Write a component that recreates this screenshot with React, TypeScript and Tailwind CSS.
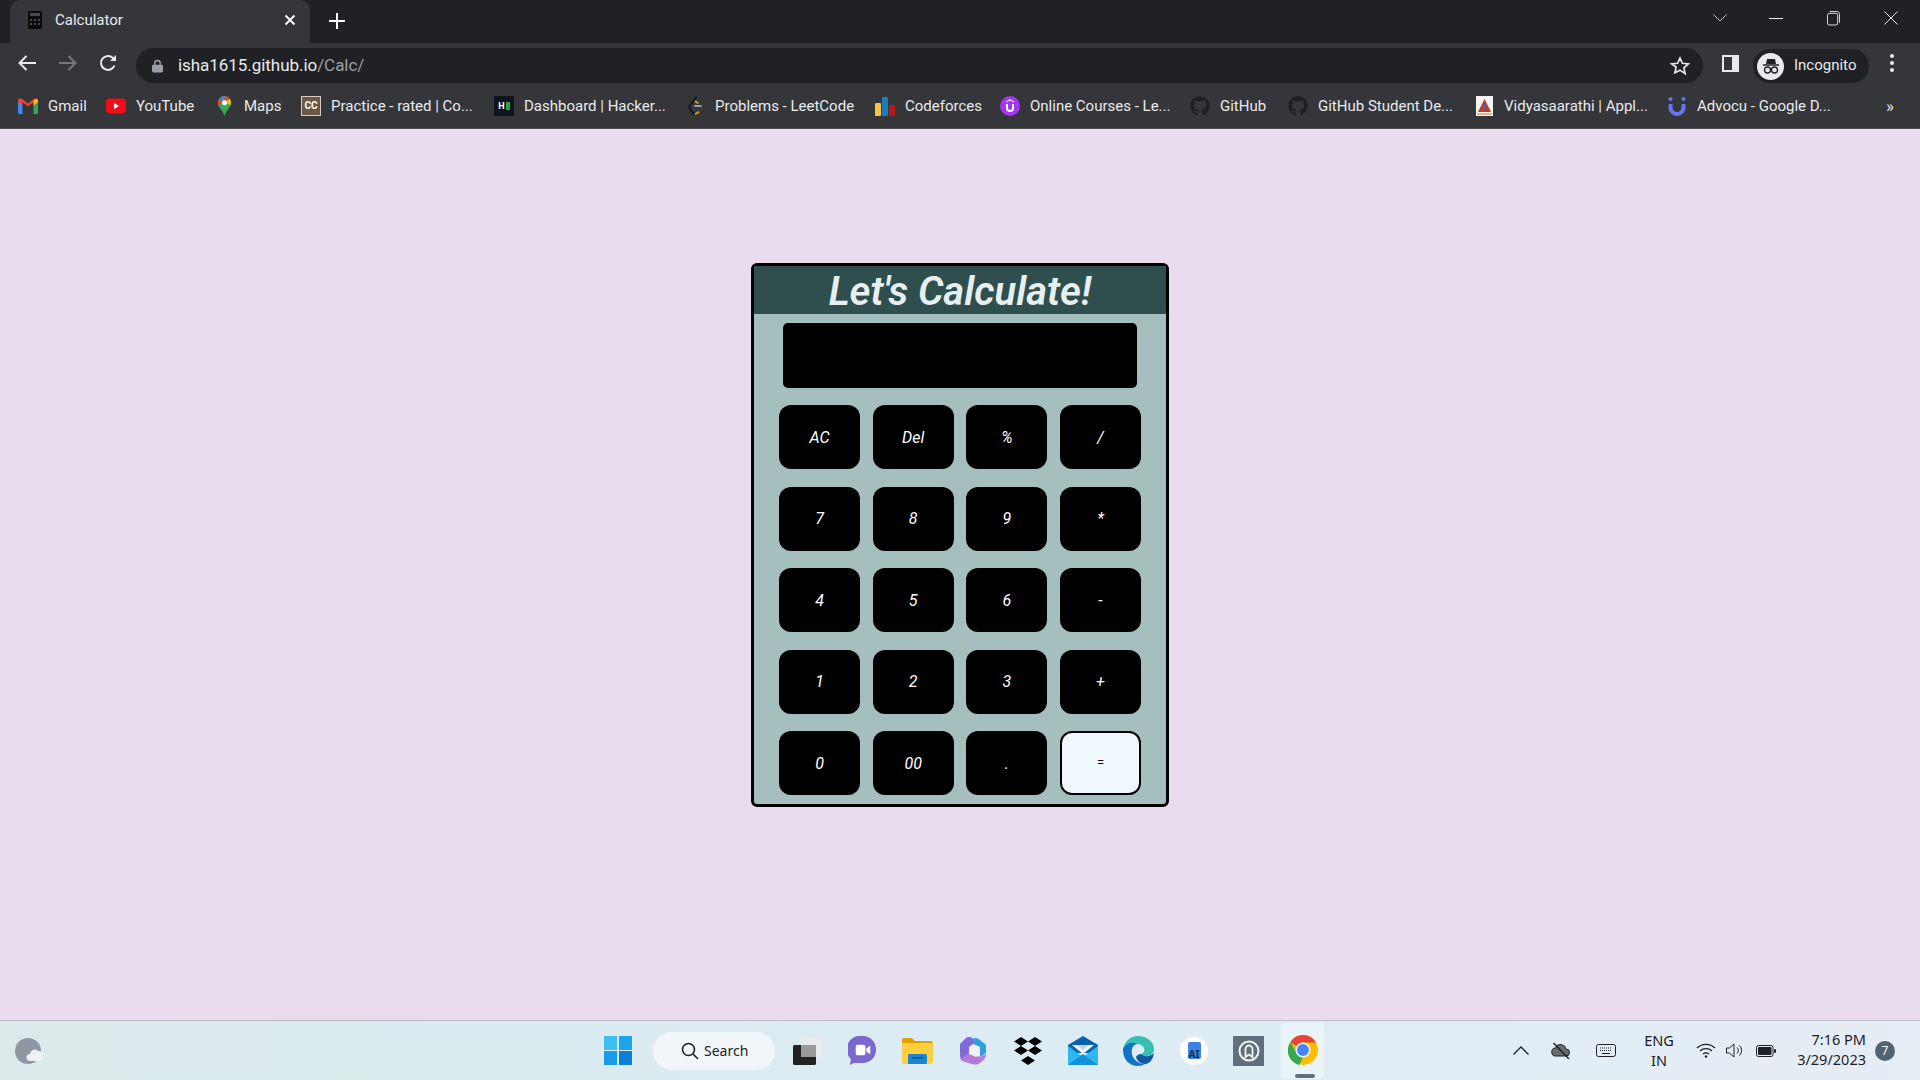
import React from 'react';
import { FaGithub } from 'react-icons/fa';

// --- bookmark bar icons ---
const GmailIcon = () => (
  <svg viewBox="0 0 20 16" className="h-[16px] w-[20px]">
    <path d="M0 3v11.5A1.5 1.5 0 0 0 1.5 16H4.500V7z" fill="#4285f4" />
    <path d="M20 3v11.5a1.500 1.500 0 0 1-1.500 1.500H15.500V7z" fill="#34a853" />
    <path d="M0 2.500C0 .5 2.300-.5 3.800.700L10 5.400 16.200.7C17.700-.5 20 .5 20 2.500V4l-4.500 3.400V4.200L10 8.400 4.500 4.200v3.200L0 4z" fill="#ea4335" />
    <path d="M15.500 2.800l2-1.500C18.600.7 20 1.400 20 2.800V4l-4.500 3.400z" fill="#fbbc04" />
  </svg>
);

const YoutubeIcon = () => (
  <svg viewBox="0 0 20 16" className="h-[16px] w-[20px]">
    <rect width="20" height="15" y="0.500" rx="4" fill="#f40d18" />
    <path d="M8 5l5 3-5 3z" fill="#fff" />
  </svg>
);

const MapsIcon = () => (
  <svg viewBox="0 0 16 24" className="h-[20px] w-[15px]">
    <path d="M8 0a8 8 0 0 1 8 8c0 5-5 8-8 16C5 16 0 13 0 8a8 8 0 0 1 8-8z" fill="#34a853" />
    <path d="M2 3a8 8 0 0 1 6-3v5a3 3 0 0 0-2.300 1z" fill="#4285f4" />
    <path d="M8 0a8 8 0 0 1 6.500 3.300L10.300 6A3 3 0 0 0 8 5z" fill="#ea4335" />
    <path d="M14.500 3.300A8 8 0 0 1 15 11L10 8.500A3 3 0 0 0 10.300 6z" fill="#fbbc04" />
    <path d="M2 3a8 8 0 0 0-1.200 8.500L5.700 6.300z" fill="#ea4335" />
    <circle cx="8" cy="8" r="3" fill="#fff" />
  </svg>
);

const ChefIcon = () => (
  <span className="flex h-[20px] w-[20px] items-center justify-center border border-[#d8cdc0] bg-[#6e5745] text-[10px] leading-none font-bold text-white">
    CC
  </span>
);

const RankIcon = () => (
  <span className="flex h-[20px] w-[20px] items-center justify-center gap-[1px] bg-[#0e141e]">
    <span className="text-[9px] leading-none font-bold text-white">H</span>
    <span className="h-[8px] w-[4px] bg-[#1ba94c]" />
  </span>
);

const LeetIcon = () => (
  <svg viewBox="0 0 18 24" className="h-[20px] w-[16px]" fill="none" strokeWidth="2">
    <path d="M11 1L3 11" stroke="#111" />
    <path d="M3 11L2 13l2 5 5 4" stroke="#111" />
    <path d="M9 6l4 3" stroke="#e6a020" />
    <path d="M8 12h9" stroke="#b3b3b3" />
    <path d="M9 22l5-3" stroke="#e6a020" />
  </svg>
);

const ForcesIcon = () => (
  <span className="flex h-[20px] w-[20px] items-end gap-[1px]">
    <span className="h-[13px] w-[6px] rounded-[1px] bg-[#f6c343]" />
    <span className="h-[19px] w-[6px] rounded-[1px] bg-[#1c7cc0]" />
    <span className="h-[11px] w-[6px] rounded-[1px] bg-[#b31b1b]" />
  </span>
);

const UdemyIcon = () => (
  <svg viewBox="0 0 20 20" className="h-[20px] w-[20px]">
    <circle cx="10" cy="10" r="10" fill="#a435f0" />
    <path d="M10 3l4 2.500v1L10 4.200 6 6.500v-1z" fill="#fff" />
    <path d="M7 8v4a3 3 0 0 0 6 0V8" fill="none" stroke="#fff" strokeWidth="2" />
  </svg>
);

const VidyaIcon = () => (
  <svg viewBox="0 0 17 20" className="h-[20px] w-[17px]">
    <rect width="17" height="20" fill="#f4f4f4" />
    <path d="M8.500 3L15 16H2z" fill="#c0392b" />
    <rect x="7" y="8" width="3" height="6" fill="#2f6fb3" />
    <rect x="1" y="17" width="15" height="2" fill="#e3b58d" />
  </svg>
);

const AdvocuIcon = () => (
  <svg viewBox="0 0 18 20" className="h-[20px] w-[18px]">
    <path d="M2.500 8v3.500a6.500 6.500 0 0 0 13 0V8" fill="none" stroke="#6675f0" strokeWidth="4" />
    <circle cx="2.500" cy="3" r="2" fill="#6675f0" />
    <circle cx="15.500" cy="3" r="2" fill="#6675f0" />
  </svg>
);

const bookmarks = [
  { icon: <GmailIcon />, label: 'Gmail', box: 'w-[88px]' },
  { icon: <YoutubeIcon />, label: 'YouTube', box: 'w-[108px]' },
  { icon: <MapsIcon />, label: 'Maps', box: 'w-[87px]' },
  { icon: <ChefIcon />, label: 'Practice - rated | Co...', box: 'w-[193px]' },
  { icon: <RankIcon />, label: 'Dashboard | Hacker...', box: 'w-[191px]' },
  { icon: <LeetIcon />, label: 'Problems - LeetCode', box: 'w-[190px]' },
  { icon: <ForcesIcon />, label: 'Codeforces', box: 'w-[125px]' },
  { icon: <UdemyIcon />, label: 'Online Courses - Le...', box: 'w-[190px]' },
  { icon: <FaGithub className="h-[20px] w-[20px] text-[#1d2023]" />, label: 'GitHub', box: 'w-[98px]' },
  { icon: <FaGithub className="h-[20px] w-[20px] text-[#1d2023]" />, label: 'GitHub Student De...', box: 'w-[186px]' },
  { icon: <VidyaIcon />, label: 'Vidyasaarathi | Appl...', box: 'w-[193px]' },
  { icon: <AdvocuIcon />, label: 'Advocu - Google D...', box: 'w-[190px]' },
];

function BrowserChrome() {
  return (
    <div className="font-['Roboto',sans-serif] text-[#e8eaed]">
      {/* tab strip */}
      <div className="flex h-[43px] items-start bg-[#202124] pl-[10px]">
        <div className="flex h-[43px] w-[300px] items-center rounded-t-[10px] bg-[#35363a] pb-[3px] pl-[18px]">
          <svg viewBox="0 0 14 18" className="h-[18px] w-[14px]">
            <rect width="14" height="18" rx="2" fill="#0b0b0b" />
            <rect x="2" y="2" width="10" height="3" fill="#4a4a4a" />
            <path d="M2 8h2v2H2zM6 8h2v2H6zM10 8h2v2h-2zM2 12h2v2H2zM6 12h2v2H6zM10 12h2v2h-2z" fill="#4a4a4a" />
          </svg>
          <span className="ml-[13px] w-[229px] text-[15px]">Calculator</span>
          <svg viewBox="0 0 12 12" className="h-[12px] w-[12px]" stroke="#fff" strokeWidth="1.800">
            <path d="M1.500 1.500l9 9M10.500 1.500l-9 9" />
          </svg>
        </div>
        <svg viewBox="0 0 16 16" className="mt-[13px] ml-[19px] h-[16px] w-[16px]" stroke="#fff" strokeWidth="2">
          <path d="M8 0v16M0 8h16" />
        </svg>
        <div className="ml-auto flex h-[36px] items-center text-[#e8eaed]">
          <svg viewBox="0 0 14 8" className="mr-[42px] h-[8px] w-[14px]" fill="none" stroke="#bdc1c6">
            <path d="M.5.5L7 7l6.500-6.500" />
          </svg>
          <span className="mr-[44px] h-[1px] w-[14px] bg-[#e8eaed]" />
          <svg viewBox="0 0 14 16" className="mr-[44px] h-[16px] w-[13px]" fill="none" stroke="#e8eaed">
            <rect x=".5" y="3" width="11" height="12.500" rx="2" />
            <path d="M3 1h7.500a3 3 0 0 1 3 3v9" />
          </svg>
          <svg viewBox="0 0 14 14" className="mr-[22px] h-[14px] w-[14px]" stroke="#e8eaed">
            <path d="M.5.5l13 13M13.500.5l-13 13" />
          </svg>
        </div>
      </div>
      {/* toolbar */}
      <div className="flex h-[40px] items-center bg-[#35363a]">
        <svg viewBox="0 0 18 16" className="ml-[18px] h-[16px] w-[18px]" fill="none" stroke="#e8eaed" strokeWidth="2">
          <path d="M18 8H2M8.500 1L1.500 8l7 7" />
        </svg>
        <svg viewBox="0 0 18 16" className="ml-[23px] h-[16px] w-[18px]" fill="none" stroke="#76787c" strokeWidth="2">
          <path d="M0 8h16M9.500 1l7 7-7 7" />
        </svg>
        <svg viewBox="0 0 18 18" className="ml-[22px] h-[18px] w-[18px]" fill="none" stroke="#e8eaed" strokeWidth="2">
          <path d="M15.500 11.500A7 7 0 1 1 14 4l2 2" />
          <path d="M17 1v6h-6z" fill="#e8eaed" stroke="none" />
        </svg>
        {/* address bar */}
        <div className="ml-[19px] flex h-[35px] w-[1567px] items-center self-end rounded-[18px] bg-[#202124]">
          <svg viewBox="0 0 12 14" className="ml-[16px] h-[14px] w-[11px]" fill="#9aa0a6">
            <path d="M3 6V4a3 3 0 0 1 6 0v2" fill="none" stroke="#9aa0a6" strokeWidth="1.500" />
            <rect y="5.500" width="12" height="8.500" rx="1.500" />
          </svg>
          <span className="ml-[15px] text-[17px] tracking-[-0.05px]">
            isha1615.github.io<span className="text-[#9aa0a6]">/Calc/</span>
          </span>
          <svg viewBox="0 0 24 24" className="mr-[13px] ml-auto h-[20px] w-[20px]" fill="none" stroke="#e8eaed" strokeWidth="2">
            <path d="M12 2.500l2.900 6.300 6.900.8-5.100 4.700 1.400 6.800L12 17l-6.100 3.100 1.400-6.800L2.200 9.600l6.900-.8z" />
          </svg>
        </div>
        <span className="ml-[19px] flex h-[17px] w-[17px] items-center justify-end border-[2px] border-[#e8eaed] bg-[#35363a]">
          <span className="h-full w-[5px] bg-[#e8eaed]" />
        </span>
        <div className="ml-[14px] flex h-[34px] w-[116px] items-center self-end rounded-[17px] bg-[#202124]">
          <span className="ml-[4px] flex h-[27px] w-[27px] items-center justify-center rounded-full bg-[#e8eaed]">
            <svg viewBox="0 0 20 20" className="h-[20px] w-[20px]" fill="none" stroke="#202124">
              <path d="M6 3h8l1 5H5z" fill="#202124" stroke="none" />
              <path d="M2 9h16" strokeWidth="1.500" />
              <circle cx="6.500" cy="14" r="3" strokeWidth="1.300" />
              <circle cx="13.500" cy="14" r="3" strokeWidth="1.300" />
            </svg>
          </span>
          <span className="mb-[2px] ml-[10px] text-[15px]">Incognito</span>
        </div>
        <span className="ml-[21px] flex flex-col gap-[3px]">
          <span className="h-[4px] w-[4px] rounded-full bg-[#e8eaed]" />
          <span className="h-[4px] w-[4px] rounded-full bg-[#e8eaed]" />
          <span className="h-[4px] w-[4px] rounded-full bg-[#e8eaed]" />
        </span>
      </div>
      {/* bookmarks */}
      <div className="flex h-[46px] items-center border-b border-[#4a4c50] bg-[#35363a] pt-[1px] pl-[18px] text-[15px]">
        {bookmarks.map((b) => (
          <div key={b.label} className={`flex items-center ${b.box}`}>
            <span className="flex w-[20px] justify-center">{b.icon}</span>
            <span className="ml-[10px] whitespace-nowrap">{b.label}</span>
          </div>
        ))}
        <span className="ml-[29px] text-[17px] leading-none">»</span>
      </div>
    </div>
  );
}

const keys = ['AC', 'Del', '%', '/', '7', '8', '9', '*', '4', '5', '6', '-', '1', '2', '3', '+', '0', '00', '.'];

function Calculator() {
  return (
    <div className="h-[544px] w-[418px] overflow-hidden rounded-[6px] border-[3px] border-black bg-[#a5bfbe]">
      <div className="flex h-[48px] items-center justify-center bg-[#2f4f4f] pt-[3px]">
        <h1 className="font-['Roboto',sans-serif] text-[40px] leading-none font-semibold text-[#e8eff1] italic">
          Let's Calculate!
        </h1>
      </div>
      <div className="mx-auto mt-[9px] h-[65px] w-[354px] rounded-[5px] bg-black" />
      <div className="mx-auto mt-[17px] grid w-[362px] grid-cols-4 gap-x-[12.670px] gap-y-[17.500px]">
        {keys.map((k) => (
          <button
            key={k}
            className="h-[64px] rounded-[12px] bg-black pt-[1px] font-['Roboto',sans-serif] text-[16px] font-[450] text-white italic"
          >
            {k}
          </button>
        ))}
        <button className="h-[64px] rounded-[12px] border-[2px] border-black bg-[#f0f8ff] font-['Roboto',sans-serif] text-[13px] text-black">
          =
        </button>
      </div>
    </div>
  );
}

// --- taskbar icons ---
const WeatherIcon = () => (
  <svg viewBox="0 0 28 26" className="h-[26px] w-[28px]">
    <circle cx="13" cy="13" r="13" fill="#8f98a2" />
    <path d="M15 23a3.500 3.500 0 0 1 0-7 5 5 0 0 1 8.500-3 4 4 0 0 1 1 10z" fill="#eef2f4" />
  </svg>
);

const WinLogo = () => (
  <span className="grid h-[29px] w-[28px] grid-cols-2 gap-[1.500px]">
    <span className="bg-[#3cc0f4]" />
    <span className="bg-[#1aa5ec]" />
    <span className="bg-[#1a9be8]" />
    <span className="bg-[#0a7fd8]" />
  </span>
);

const TaskView = () => (
  <svg viewBox="0 0 30 28" className="h-[28px] w-[30px]">
    <rect x="0" y="8" width="23" height="20" rx="1.500" fill="#222" />
    <rect x="8" y="0" width="22" height="20" rx="1.500" fill="#e8eaec" />
    <rect x="8" y="8" width="15" height="12" fill="#9a9a9a" />
  </svg>
);

const ChatIcon = () => (
  <svg viewBox="0 0 30 30" className="h-[29px] w-[29px]">
    <path d="M15 0c8 0 14 6 14 14s-6 14-14 14H6l-4 2 1-6A14 14 0 0 1 15 0z" fill="#7a68cf" />
    <rect x="8" y="9" width="10" height="11" rx="2" fill="#fff" />
    <path d="M19 13l4-3v9l-4-3z" fill="#fff" />
  </svg>
);

const FolderIcon = () => (
  <svg viewBox="0 0 31 26" className="h-[26px] w-[31px]">
    <path d="M0 2a2 2 0 0 1 2-2h8l3 3h16a2 2 0 0 1 2 2v6H0z" fill="#e0a000" />
    <path d="M0 5h31v19a2 2 0 0 1-2 2H2a2 2 0 0 1-2-2z" fill="#fbcf3f" />
    <rect x="6" y="16" width="19" height="10" rx="1.500" fill="#1a86d0" />
    <rect x="10" y="19" width="11" height="1.500" fill="#0b4f8a" />
  </svg>
);

const CopilotIcon = () => (
  <svg viewBox="0 0 26 28" className="h-[28px] w-[26px]">
    <path d="M6 1c3-2 6-1 7 1v14L1 23c-1-3-1-5-1-8V7z" fill="#7f6ad8" />
    <path d="M13 2c2-2 5-1 7 1l6 5v8l-6 4V10l-7-3z" fill="#2f9fe0" />
    <path d="M1 22l8-6 11 4 6-3c0 4-2 6-5 8-3 3-6 3-9 2l-7-2c-2-1-4-1-4-3z" fill="#b57ad8" />
    <path d="M9 10l4-3 7 3v8l-4 2-7-3z" fill="#eef2f6" />
  </svg>
);

const DropboxIcon = () => (
  <svg viewBox="0 0 30 28" className="h-[28px] w-[30px]" fill="#000">
    <path d="M8 0l7 4.500L8 9 1 4.500zM22 0l7 4.500L22 9l-7-4.500zM8 9l7 4.500L8 18l-7-4.500zM22 9l7 4.500L22 18l-7-4.500zM15 19l7 4.500-7 4.500-7-4.500z" />
  </svg>
);

const MailIcon = () => (
  <svg viewBox="0 0 30 29" className="h-[29px] w-[30px]">
    <path d="M0 9l15-9 15 9v8H0z" fill="#0a62ad" />
    <path d="M4 9h22L15 18z" fill="#f4f6f8" />
    <path d="M9 9h12l-6 5z" fill="#c9d1d8" />
    <path d="M0 10l15 11 15-11v19H0z" fill="#2cb8f0" />
    <path d="M0 29l15-11 15 11z" fill="#1490dc" />
  </svg>
);

const EdgeIcon = () => (
  <svg viewBox="0 0 32 30" className="h-[30px] w-[32px]">
    <path d="M15 0c9 0 16 6 16 13 0 5-4 7-8 7-3 0-5-1-5-2 3-1 4-3 3-6-2-4-7-5-11-3C5 11 2 13 0 14 1 6 7 0 15 0z" fill="#35c1b0" />
    <path d="M0 14c1-6 9-9 14-6-4 1-6 5-5 10 1 6 7 10 13 10-2 1-5 2-7 2C6 30 0 23 0 14z" fill="#1173c8" />
    <path d="M18 18c3 3 9 3 13-1-1 7-5 11-9 11-4 0-8-3-9-7 1-2 3-3 5-3z" fill="#0c59a4" />
  </svg>
);

const StudioIcon = () => (
  <span className="flex h-[28px] w-[28px] items-center justify-center rounded-full bg-white">
    <span className="flex h-[17px] w-[13px] items-end justify-center rounded-[2px] bg-[#3b82e6] text-[10px] leading-none font-bold text-[#12305e]">
      AI
    </span>
  </span>
);

const GreyAppIcon = () => (
  <span className="flex h-[30px] w-[31px] items-center justify-center bg-[#5f707c]">
    <svg viewBox="0 0 22 22" className="h-[22px] w-[22px]" fill="none" stroke="#f2f4f5">
      <circle cx="11" cy="11" r="9.500" strokeWidth="2" />
      <path d="M7.500 17V9a3.500 3.500 0 0 1 7 0v8l-3.500-2.500z" strokeWidth="1.800" />
    </svg>
  </span>
);

const ChromeIcon = () => (
  <svg viewBox="0 0 30 30" className="h-[30px] w-[30px]">
    <circle cx="15" cy="15" r="15" fill="#fbbc04" />
    <path d="M15 0a15 15 0 0 1 13 7.500H15a7.500 7.500 0 0 0-6.500 3.750L2.500 7A15 15 0 0 1 15 0z" fill="#ea4335" />
    <path d="M2.500 7l6 11a7.500 7.500 0 0 0 6.500 4.500L11 30A15 15 0 0 1 2.500 7z" fill="#34a853" />
    <circle cx="15" cy="15" r="7.500" fill="#fff" />
    <circle cx="15" cy="15" r="6" fill="#4285f4" />
  </svg>
);

function Taskbar() {
  return (
    <div className="flex h-[60px] items-center border-t border-[#b7bcc8] bg-gradient-to-r from-[#dbe9ea] via-[#dbecf4] to-[#e6edf4] font-['Noto_Sans',sans-serif] text-[#1d2125]">
      <span className="ml-[15px]">
        <WeatherIcon />
      </span>
      <span className="ml-[561px]">
        <WinLogo />
      </span>
      <div className="ml-[21px] flex h-[38px] w-[122px] items-center rounded-[19px] bg-[#f2f6fa] text-[14px]">
        <svg viewBox="0 0 18 18" className="ml-[28px] h-[18px] w-[18px]" fill="none" stroke="#1d2125" strokeWidth="1.600">
          <circle cx="7.500" cy="7.500" r="6" />
          <path d="M12 12l5 5" />
        </svg>
        <span className="ml-[5px]">Search</span>
      </div>
      <span className="ml-[18px]">
        <TaskView />
      </span>
      <span className="ml-[25px]">
        <ChatIcon />
      </span>
      <span className="ml-[25px]">
        <FolderIcon />
      </span>
      <span className="ml-[27px]">
        <CopilotIcon />
      </span>
      <span className="ml-[27px]">
        <DropboxIcon />
      </span>
      <span className="ml-[25px]">
        <MailIcon />
      </span>
      <span className="ml-[25px]">
        <EdgeIcon />
      </span>
      <span className="ml-[25px]">
        <StudioIcon />
      </span>
      <span className="ml-[25px]">
        <GreyAppIcon />
      </span>
      <div className="relative ml-[17px] flex h-[56px] w-[43px] items-center justify-center rounded-[4px] bg-[#eaf4f8]">
        <span className="-mt-[2px]">
          <ChromeIcon />
        </span>
        <span className="absolute bottom-[1px] left-[14px] h-[4px] w-[20px] rounded-[2px] bg-[#5f707c]" />
      </div>

      {/* tray */}
      <svg viewBox="0 0 16 9" className="ml-[189px] h-[9px] w-[16px]" fill="none" stroke="#1d2125" strokeWidth="1.300">
        <path d="M.5 8.500L8 1l7.500 7.500" />
      </svg>
      <svg viewBox="0 0 20 16" className="ml-[22px] h-[16px] w-[20px]" fill="#6a6d70" stroke="#1d2125">
        <path d="M5 13a4 4 0 0 1-.5-8 5.500 5.500 0 0 1 10.500 1 3.500 3.500 0 0 1 0 7z" />
        <path d="M2.500 0L18 16" strokeWidth="1.500" />
      </svg>
      <svg viewBox="0 0 20 14" className="ml-[25px] h-[14px] w-[20px]" fill="none" stroke="#1d2125">
        <rect x=".5" y=".5" width="19" height="12" rx="2" />
        <path d="M4 4h12M4 6.500h12" strokeDasharray="1 1" />
        <path d="M6 9.500h8" />
      </svg>
      <div className="mb-[2px] ml-[21px] flex w-[44px] flex-col items-center text-[14.500px] leading-[20px]">
        <span>ENG</span>
        <span>IN</span>
      </div>
      <svg viewBox="0 0 20 15" className="ml-[15px] h-[15px] w-[20px]" fill="none" stroke="#1d2125" strokeWidth="1.300">
        <path d="M1 5a13 13 0 0 1 18 0M4 8a9 9 0 0 1 12 0M7 11a5 5 0 0 1 6 0" />
        <circle cx="10" cy="13.500" r="1.200" fill="#1d2125" stroke="none" />
      </svg>
      <svg viewBox="0 0 19 15" className="ml-[10px] h-[15px] w-[19px]" fill="none" stroke="#1d2125">
        <path d="M.5 5h3L8 1v13L3.500 10h-3z" />
        <path d="M11 4.500a4 4 0 0 1 0 6M13.500 2.500a7 7 0 0 1 0 10" />
      </svg>
      <svg viewBox="0 0 20 12" className="ml-[11px] h-[12px] w-[20px]">
        <rect x=".5" y=".5" width="16.500" height="11" rx="2" fill="none" stroke="#1d2125" />
        <rect x="2" y="2" width="13.500" height="8" rx="1" fill="#1d2125" />
        <rect x="18" y="4" width="2" height="4" rx="1" fill="#1d2125" />
      </svg>
      <div className="mb-[4px] ml-[15px] flex w-[75px] flex-col items-end text-[14.500px] leading-[20px] whitespace-nowrap">
        <span>7:16 PM</span>
        <span>3/29/2023</span>
      </div>
      <span className="ml-[9px] flex h-[20px] w-[20px] items-center justify-center rounded-full bg-[#4f6372] text-[12px] text-white">
        7
      </span>
    </div>
  );
}

export default function App() {
  return (
    <div className="flex h-[1080px] w-[1920px] flex-col overflow-hidden bg-[#e9dcee]">
      <BrowserChrome />
      <main className="flex flex-1 justify-center pt-[134px]">
        <Calculator />
      </main>
      <Taskbar />
    </div>
  );
}
